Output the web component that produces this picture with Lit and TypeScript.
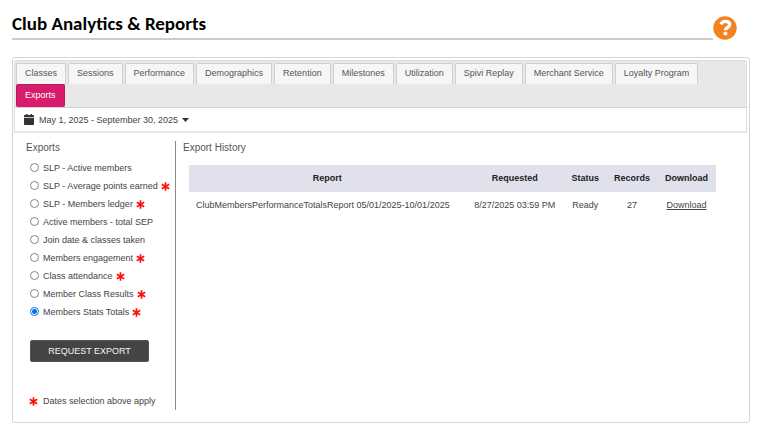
import { LitElement, css, html, svg } from "lit";
import { customElement, state } from "lit/decorators.js";
import { classMap } from "lit/directives/class-map.js";

const TABS = [
  "Classes",
  "Sessions",
  "Performance",
  "Demographics",
  "Retention",
  "Milestones",
  "Utilization",
  "Spivi Replay",
  "Merchant Service",
  "Loyalty Program",
  "Exports",
];

const EXPORTS = [
  { label: "SLP - Active members", dated: false },
  { label: "SLP - Average points earned", dated: true },
  { label: "SLP - Members ledger", dated: true },
  { label: "Active members - total SEP", dated: false },
  { label: "Join date & classes taken", dated: false },
  { label: "Members engagement", dated: true },
  { label: "Class attendance", dated: true },
  { label: "Member Class Results", dated: true },
  { label: "Members Stats Totals", dated: true },
];

const HISTORY = [
  {
    report: "ClubMembersPerformanceTotalsReport 05/01/2025-10/01/2025",
    requested: "8/27/2025 03:59 PM",
    status: "Ready",
    records: 27,
  },
];

const star = () => html`<svg class="star" viewBox="0 0 9 9" aria-hidden="true">
  ${svg`<path d="M4.5 .2V8.800M.8 2.300 8.200 6.700M8.200 2.300 .8 6.700" fill="none" stroke="#fb1010" stroke-width="1.700"/>`}
</svg>`;

@customElement("app-root")
export class AppRoot extends LitElement {
  @state() private tab = "Exports";
  @state() private selected = "Members Stats Totals";

  static styles = css`
    :host {
      display: block;
      box-sizing: border-box;
      padding: 11px 18px 14px 12px;
      background: #fff;
      color: #444;
      font: 9px/12px "Liberation Sans", Arial, sans-serif;
    }
    * {
      box-sizing: border-box;
    }
    button {
      font: inherit;
      cursor: pointer;
    }
    .header {
      display: flex;
      align-items: flex-end;
      padding-right: 13px;
    }
    .title {
      flex: 1;
      margin: 0;
      padding-bottom: 2px;
      border-bottom: 2px solid #ccc;
      color: #000;
      font: bold 19px/25px Carlito, Calibri, Lato, sans-serif;
    }
    .help {
      display: block;
      padding: 0;
      border: 0;
      background: none;
    }
    .help svg {
      display: block;
      width: 24px;
      height: 24px;
    }
    .panel {
      margin-top: 17px;
      padding: 2px 2px 12px 1px;
      border: 1px solid #d4d4d4;
      border-radius: 3px;
    }
    .tabs {
      display: flex;
      flex-wrap: wrap;
      column-gap: 2px;
      padding: 2px 4px 0 1px;
      border: 1px solid #ddd;
      border-bottom-color: #d2d2d2;
      border-radius: 3px 3px 0 0;
      background: #e8e8e8;
    }
    .tab {
      height: 21px;
      padding: 0 8px 2px;
      border: 1px solid #d0d0d0;
      border-bottom: 0;
      border-radius: 2px 2px 0 0;
      background: #f6f6f6;
      color: #555;
    }
    .tab.active {
      height: 23px;
      border-color: #b81b5d;
      border-radius: 2px;
      background: #d61c6b;
      color: #fff;
    }
    .dates {
      padding: 0 9px;
      border: 1px solid #ddd;
      border-top: 0;
      border-bottom: 2px solid #e8e8e8;
    }
    .range {
      display: flex;
      align-items: center;
      height: 23px;
      padding: 0;
      border: 0;
      background: none;
      color: #444;
    }
    .calendar {
      width: 10px;
      height: 11px;
      margin-right: 5px;
    }
    .caret {
      width: 7px;
      height: 4px;
      margin-left: 4px;
    }
    .columns {
      display: flex;
      margin-top: 8px;
    }
    .side {
      flex: none;
      width: 162px;
      height: 269px;
      padding: 0 6px 0 12px;
      border-right: 1px solid #8a8a8a;
    }
    .main {
      flex: 1;
      padding: 0 31px 0 7px;
    }
    .heading {
      margin: 0;
      color: #555;
      font: 10px/13px "Liberation Sans", Arial, sans-serif;
    }
    .options {
      margin: 5px 0 0;
      padding: 0 0 0 4px;
      border: 0;
    }
    .option {
      display: flex;
      align-items: center;
      height: 18px;
      white-space: nowrap;
    }
    .radio {
      flex: none;
      appearance: none;
      width: 9px;
      height: 9px;
      margin: 0 4px 2px 0;
      border: 1px solid #858585;
      border-radius: 50%;
      background: #fff;
    }
    .radio:checked {
      border-color: #0075e0;
      background: radial-gradient(circle, #0075e0 2px, #fff 3px);
    }
    .star {
      flex: none;
      width: 9px;
      height: 9px;
    }
    .option .star {
      margin-left: 3px;
    }
    .request {
      display: block;
      width: 119px;
      height: 22px;
      margin: 19px 0 0 4px;
      padding: 0;
      border: 1px solid #555;
      border-radius: 2px;
      background: #444;
      color: #f4f4f4;
    }
    .note {
      display: flex;
      align-items: center;
      gap: 5px;
      margin: 33px 0 0 3px;
    }
    .scroll {
      padding-left: 6px;
    }
    .history {
      width: 100%;
      margin-top: 11px;
      border-collapse: collapse;
      table-layout: fixed;
    }
    .history th {
      height: 27px;
      padding: 0 0 2px;
      background: #e1e1ed;
      color: #222;
    }
    .history td {
      height: 26px;
      padding: 0;
      text-align: center;
      white-space: nowrap;
    }
    .history td.name {
      padding-left: 7px;
      text-align: left;
    }
    .c-requested {
      width: 18.6%;
    }
    .c-status {
      width: 8.2%;
    }
    .c-records {
      width: 9.5%;
    }
    .c-download {
      width: 11.2%;
    }
    .link {
      color: #444;
    }
  `;

  render() {
    return html`
      <header class="header">
        <h1 class="title">Club Analytics &amp; Reports</h1>
        <button class="help" aria-label="Help">
          <svg viewBox="0 0 24 24" aria-hidden="true">
            <circle cx="12" cy="12" r="11.7" fill="#f58220" />
            <path d="M8.1 8.300C8.900 6.300 10.300 5.400 12.300 5.400c2.600 0 4.400 1.300 4.400 3.200 0 3-4.200 2.800-4.200 5.600" fill="none" stroke="#fff" stroke-width="3.400" />
            <circle cx="12.400" cy="17.500" r="2" fill="#fff" />
          </svg>
        </button>
      </header>
      <main class="panel">
        <div class="tabs" role="tablist">
          ${TABS.map(
            (name) => html`<button
              role="tab"
              aria-selected=${name === this.tab}
              class=${classMap({ tab: true, active: name === this.tab })}
              @click=${() => (this.tab = name)}
            >${name}</button>`
          )}
        </div>
        <div class="dates">
          <button class="range">
            <svg class="calendar" viewBox="0 0 10 11" aria-hidden="true">
              <path d="M2 0h1.500v1h3V0H8v1h1.200q.8 0 .8.800V3.200H0V1.800Q0 1 .8 1H2ZM0 4h10v6.200q0 .8-.8.800H.8q-.8 0-.8-.8Z" fill="#333" />
            </svg>
            <span>May 1, 2025 - September 30, 2025</span>
            <svg class="caret" viewBox="0 0 7 4" aria-hidden="true">
              <path d="M0 0h7L3.500 4Z" fill="#333" />
            </svg>
          </button>
        </div>
        <div class="columns">
          <section class="side">
            <h2 class="heading">Exports</h2>
            <fieldset class="options" aria-label="Exports">
              ${EXPORTS.map(
                (item) => html`<label class="option">
                  <input
                    class="radio"
                    type="radio"
                    name="export"
                    .checked=${item.label === this.selected}
                    @change=${() => (this.selected = item.label)}
                  />
                  <span>${item.label}</span>
                  ${item.dated ? star() : ""}
                </label>`
              )}
            </fieldset>
            <button class="request">REQUEST EXPORT</button>
            <p class="note">${star()}<span>Dates selection above apply</span></p>
          </section>
          <section class="main">
            <h2 class="heading">Export History</h2>
            <div class="scroll">
              <table class="history">
                <thead>
                  <tr>
                    <th scope="col">Report</th>
                    <th scope="col" class="c-requested">Requested</th>
                    <th scope="col" class="c-status">Status</th>
                    <th scope="col" class="c-records">Records</th>
                    <th scope="col" class="c-download">Download</th>
                  </tr>
                </thead>
                <tbody>
                  ${HISTORY.map(
                    (row) => html`<tr>
                      <td class="name">${row.report}</td>
                      <td>${row.requested}</td>
                      <td>${row.status}</td>
                      <td>${row.records}</td>
                      <td><a class="link" href="#download">Download</a></td>
                    </tr>`
                  )}
                </tbody>
              </table>
            </div>
          </section>
        </div>
      </main>
    `;
  }
}
